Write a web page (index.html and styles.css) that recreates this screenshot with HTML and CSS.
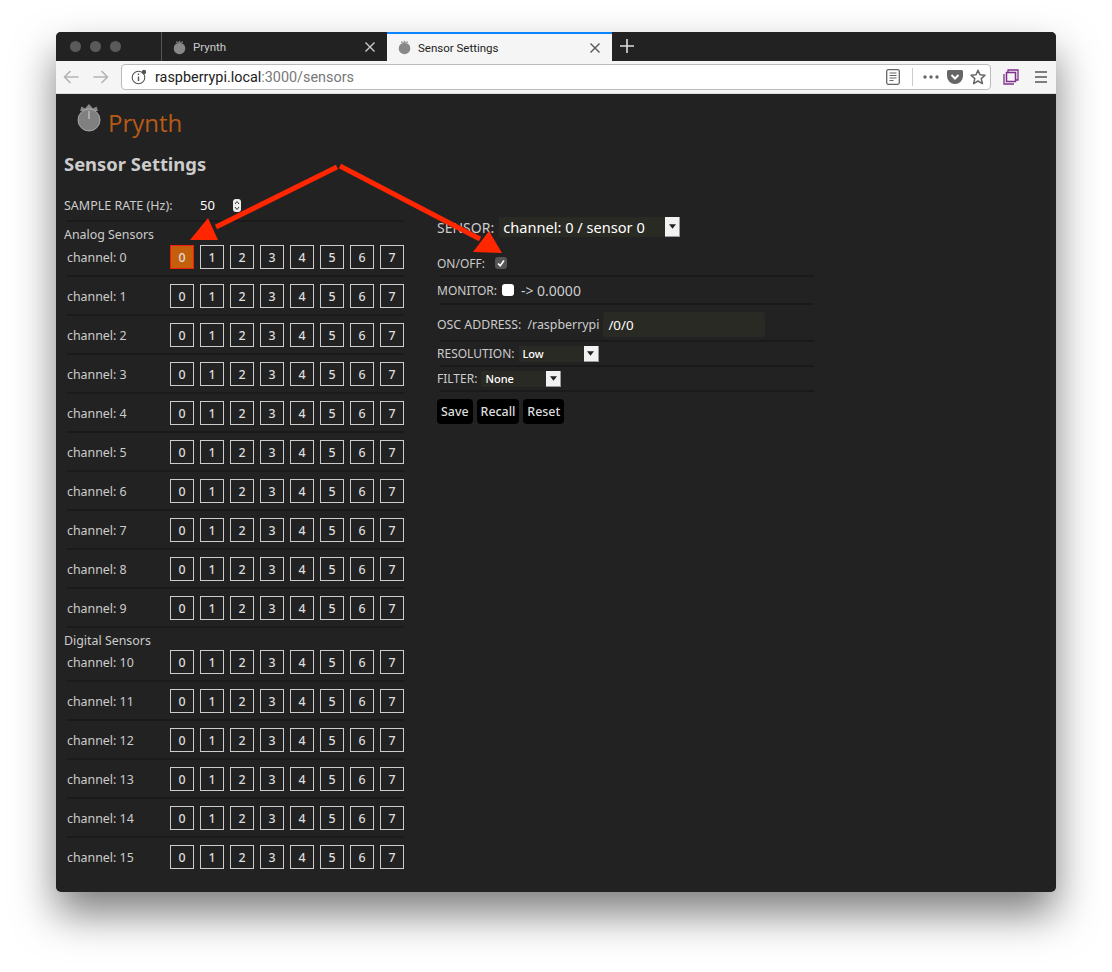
FILE: index.html
```html
<!DOCTYPE html>
<html lang="en">
<head>
  <meta charset="UTF-8">
  <meta name="viewport" content="width=device-width, initial-scale=1.0">
  <title>Sensor Settings</title>
  <link rel="stylesheet" href="styles.css">
</head>
<body>
  <div class="window">
    <!-- Barra de abas -->
    <div class="tabbar">
      <div class="lights"><i></i><i></i><i></i></div>
      <div class="tab">
        <svg class="tab-icon" viewBox="0 0 14 16"><path d="M3 3 L4 1 L5.5 2.5 L7 0.5 L8.5 2.5 L10 1 L11 3 Z" fill="#888"/><circle cx="7" cy="9" r="6.2" fill="#888"/></svg>
        <span class="tab-title">Prynth</span>
        <svg class="tab-close" viewBox="0 0 10 10"><path d="M0.5 0.5 L9.5 9.5 M9.5 0.5 L0.5 9.5" stroke="#ccc" stroke-width="1.4"/></svg>
      </div>
      <div class="tab active">
        <svg class="tab-icon" viewBox="0 0 14 16"><path d="M3 3 L4 1 L5.5 2.5 L7 0.5 L8.5 2.5 L10 1 L11 3 Z" fill="#888"/><circle cx="7" cy="9" r="6.2" fill="#888"/></svg>
        <span class="tab-title">Sensor Settings</span>
        <svg class="tab-close" viewBox="0 0 10 10"><path d="M0.5 0.5 L9.5 9.5 M9.5 0.5 L0.5 9.5" stroke="#555" stroke-width="1.4"/></svg>
      </div>
      <svg class="new-tab" viewBox="0 0 14 14"><path d="M7 0 V14 M0 7 H14" stroke="#ddd" stroke-width="1.6"/></svg>
    </div>

    <!-- Barra de navegação -->
    <div class="toolbar">
      <svg class="nav-icon" viewBox="0 0 16 14"><path d="M15.5 7 H1.5 M7.5 1 L1.5 7 L7.5 13" fill="none" stroke="#b4b4b4" stroke-width="1.6"/></svg>
      <svg class="nav-icon" viewBox="0 0 16 14"><path d="M0.5 7 H14.5 M8.5 1 L14.5 7 L8.5 13" fill="none" stroke="#b4b4b4" stroke-width="1.6"/></svg>
      <div class="urlbar">
        <svg class="info-icon" viewBox="0 0 16 16"><circle cx="7.5" cy="8.5" r="6.3" fill="none" stroke="#555" stroke-width="1.1"/><path d="M7.5 7.5 V12 M7.5 4.6 V6" stroke="#555" stroke-width="1.4"/><circle cx="13" cy="3" r="2.2" fill="#555"/></svg>
        <span class="url"><span class="url-host">raspberrypi.local</span>:3000/sensors</span>
        <svg class="reader-icon" viewBox="0 0 14 16"><rect x="0.7" y="0.7" width="12.6" height="14.6" rx="1.5" fill="none" stroke="#666" stroke-width="1.3"/><path d="M3.5 4 H10.5 M3.5 6.5 H10.5 M3.5 9 H10.5 M3.5 11.5 H7.5" stroke="#666" stroke-width="1"/></svg>
        <span class="url-sep"></span>
        <svg class="dots-icon" viewBox="0 0 16 4"><circle cx="2" cy="2" r="1.7" fill="#666"/><circle cx="8" cy="2" r="1.7" fill="#666"/><circle cx="14" cy="2" r="1.7" fill="#666"/></svg>
        <svg class="pocket-icon" viewBox="0 0 16 14"><path d="M1.5 0 H14.5 A1.5 1.5 0 0 1 16 1.5 V6 A8 8 0 0 1 0 6 V1.5 A1.5 1.5 0 0 1 1.5 0 Z" fill="#666"/><path d="M4.5 5 L8 8.5 L11.5 5" fill="none" stroke="#fff" stroke-width="2"/></svg>
        <svg class="star-icon" viewBox="0 0 16 16"><path d="M8 1.2 L10 5.8 L15 6.3 L11.2 9.6 L12.4 14.6 L8 12 L3.6 14.6 L4.8 9.6 L1 6.3 L6 5.8 Z" fill="none" stroke="#666" stroke-width="1.5" stroke-linejoin="round"/></svg>
      </div>
      <svg class="sync-icon" viewBox="0 0 16 16"><path d="M5 3 V1 H15 V11 H13" fill="none" stroke="#7f2f8c" stroke-width="1.3"/><rect x="3.5" y="3.5" width="9" height="9" fill="none" stroke="#7f2f8c" stroke-width="1.5"/><path d="M1 5 V15 H11" fill="none" stroke="#7f2f8c" stroke-width="1.3"/></svg>
      <svg class="menu-icon" viewBox="0 0 12 12"><path d="M0 1 H12 M0 6 H12 M0 11 H12" stroke="#555" stroke-width="1.5"/></svg>
    </div>

    <div class="page">
      <div class="logo">
        <svg class="logo-knob" viewBox="0 0 24 30"><path d="M3 9 L4.5 4.5 L8 6.5 L12 2 L16 6.5 L19.5 4.5 L21 9 Z" fill="#8a8a8a"/><circle cx="12" cy="18" r="11" fill="#808080" stroke="#b5b5b5" stroke-width="0.8"/><rect x="11" y="9" width="2" height="8" fill="#aaa"/></svg>
        <span class="logo-name">Prynth</span>
      </div>
      <h1>Sensor Settings</h1>

      <div class="columns">
        <div class="channels">
          <div class="sample-rate">
            <label>SAMPLE RATE (Hz):</label>
            <span class="rate-value">50</span>
            <svg class="spinner" viewBox="0 0 8 13"><rect width="8" height="13" rx="3" fill="#eee"/><path d="M2 5 L4 2.5 L6 5 M2 8 L4 10.5 L6 8" fill="none" stroke="#333"/></svg>
          </div>

          <h2>Analog Sensors</h2>
          <div class="channel"><span class="channel-name">channel: 0</span><div class="sensors"><button class="on">0</button><button>1</button><button>2</button><button>3</button><button>4</button><button>5</button><button>6</button><button>7</button></div></div>
          <div class="channel"><span class="channel-name">channel: 1</span><div class="sensors"><button>0</button><button>1</button><button>2</button><button>3</button><button>4</button><button>5</button><button>6</button><button>7</button></div></div>
          <div class="channel"><span class="channel-name">channel: 2</span><div class="sensors"><button>0</button><button>1</button><button>2</button><button>3</button><button>4</button><button>5</button><button>6</button><button>7</button></div></div>
          <div class="channel"><span class="channel-name">channel: 3</span><div class="sensors"><button>0</button><button>1</button><button>2</button><button>3</button><button>4</button><button>5</button><button>6</button><button>7</button></div></div>
          <div class="channel"><span class="channel-name">channel: 4</span><div class="sensors"><button>0</button><button>1</button><button>2</button><button>3</button><button>4</button><button>5</button><button>6</button><button>7</button></div></div>
          <div class="channel"><span class="channel-name">channel: 5</span><div class="sensors"><button>0</button><button>1</button><button>2</button><button>3</button><button>4</button><button>5</button><button>6</button><button>7</button></div></div>
          <div class="channel"><span class="channel-name">channel: 6</span><div class="sensors"><button>0</button><button>1</button><button>2</button><button>3</button><button>4</button><button>5</button><button>6</button><button>7</button></div></div>
          <div class="channel"><span class="channel-name">channel: 7</span><div class="sensors"><button>0</button><button>1</button><button>2</button><button>3</button><button>4</button><button>5</button><button>6</button><button>7</button></div></div>
          <div class="channel"><span class="channel-name">channel: 8</span><div class="sensors"><button>0</button><button>1</button><button>2</button><button>3</button><button>4</button><button>5</button><button>6</button><button>7</button></div></div>
          <div class="channel"><span class="channel-name">channel: 9</span><div class="sensors"><button>0</button><button>1</button><button>2</button><button>3</button><button>4</button><button>5</button><button>6</button><button>7</button></div></div>

          <h2 class="digital">Digital Sensors</h2>
          <div class="channel"><span class="channel-name">channel: 10</span><div class="sensors"><button>0</button><button>1</button><button>2</button><button>3</button><button>4</button><button>5</button><button>6</button><button>7</button></div></div>
          <div class="channel"><span class="channel-name">channel: 11</span><div class="sensors"><button>0</button><button>1</button><button>2</button><button>3</button><button>4</button><button>5</button><button>6</button><button>7</button></div></div>
          <div class="channel"><span class="channel-name">channel: 12</span><div class="sensors"><button>0</button><button>1</button><button>2</button><button>3</button><button>4</button><button>5</button><button>6</button><button>7</button></div></div>
          <div class="channel"><span class="channel-name">channel: 13</span><div class="sensors"><button>0</button><button>1</button><button>2</button><button>3</button><button>4</button><button>5</button><button>6</button><button>7</button></div></div>
          <div class="channel"><span class="channel-name">channel: 14</span><div class="sensors"><button>0</button><button>1</button><button>2</button><button>3</button><button>4</button><button>5</button><button>6</button><button>7</button></div></div>
          <div class="channel last"><span class="channel-name">channel: 15</span><div class="sensors"><button>0</button><button>1</button><button>2</button><button>3</button><button>4</button><button>5</button><button>6</button><button>7</button></div></div>
        </div>

        <div class="details">
          <div class="sensor-row">
            <label class="sensor-label">SENSOR:</label>
            <div class="drop big"><span>channel: 0 / sensor 0</span><i><svg viewBox="0 0 8 5"><path d="M0 0 H8 L4 5 Z" fill="#222"/></svg></i></div>
          </div>
          <div class="field onoff">
            <label>ON/OFF:</label>
            <span class="check checked"><svg viewBox="0 0 12 12"><path d="M3 6.5 L5.2 8.8 L9 3.5" fill="none" stroke="#fff" stroke-width="1.6"/></svg></span>
          </div>
          <div class="field monitor">
            <label>MONITOR:</label>
            <span class="check"></span>
            <span class="monitor-value">-&gt; 0.0000</span>
          </div>
          <div class="field osc">
            <label>OSC ADDRESS:</label>
            <span class="osc-prefix">/raspberrypi</span>
            <input class="osc-input" type="text" value="/0/0">
          </div>
          <div class="field small resolution">
            <label>RESOLUTION:</label>
            <div class="drop"><span>Low</span><i><svg viewBox="0 0 8 5"><path d="M0 0 H8 L4 5 Z" fill="#222"/></svg></i></div>
          </div>
          <div class="field small filter">
            <label>FILTER:</label>
            <div class="drop"><span>None</span><i><svg viewBox="0 0 8 5"><path d="M0 0 H8 L4 5 Z" fill="#222"/></svg></i></div>
          </div>
          <div class="actions">
            <button>Save</button>
            <button>Recall</button>
            <button>Reset</button>
          </div>
        </div>
      </div>
    </div>

    <!-- Setas vermelhas sobre a página -->
    <svg class="arrows" viewBox="0 0 1000 860">
      <path d="M281 135 L160 195" stroke="#ff2600" stroke-width="5" fill="none"/>
      <path d="M134 208 L162 208 L152 186 Z" fill="#ff2600"/>
      <path d="M284 134 L424 207" stroke="#ff2600" stroke-width="5" fill="none"/>
      <path d="M417 220 L446 221 L433 199 Z" fill="#ff2600"/>
    </svg>
  </div>
</body>
</html>
```

FILE: styles.css
```css
html, body {
  margin: 0;
  height: 100%;
  background: #fff;
}
body {
  padding: 32px 56px 0;
  box-sizing: border-box;
  overflow: hidden;
  font-family: "Noto Sans", sans-serif;
}
.window {
  position: relative;
  width: 1000px;
  height: 860px;
  border-radius: 5px;
  background: #222;
  box-shadow: 0 22px 42px rgba(0, 0, 0, 0.5);
}

/* abas */
.tabbar {
  display: flex;
  align-items: stretch;
  height: 29px;
  background: #222;
  border-radius: 5px 5px 0 0;
}
.lights {
  display: flex;
  align-items: center;
  gap: 9px;
  width: 106px;
  padding-left: 14px;
  box-sizing: border-box;
  border-right: 1px solid #555;
}
.lights i {
  width: 11px;
  height: 11px;
  border-radius: 50%;
  background: #5a5a5a;
}
.tab {
  display: flex;
  align-items: center;
  width: 225px;
  padding: 1px 12px 0 11px;
  box-sizing: border-box;
  color: #ccc;
  font: 11.5px Roboto, sans-serif;
}
.tab.active {
  background: #f5f5f5;
  color: #222;
  border-top: 2px solid #0a84ff;
  padding-top: 0;
}
.tab-icon {
  width: 13px;
  height: 15px;
  margin-right: 7px;
}
.tab-title {
  flex: 1;
}
.tab-close {
  width: 10px;
  height: 10px;
}
.new-tab {
  width: 14px;
  height: 14px;
  margin: 7px 0 0 8px;
}

/* navegação */
.toolbar {
  display: flex;
  align-items: center;
  height: 33px;
  background: #f5f5f5;
  padding-left: 7px;
  box-sizing: border-box;
  border-bottom: 1px solid #ddd;
}
.nav-icon {
  width: 16px;
  height: 14px;
  margin-right: 14px;
}
.nav-icon + .urlbar {
  margin-left: -2px;
}
.urlbar {
  display: flex;
  align-items: center;
  width: 870px;
  height: 26px;
  background: #fff;
  border: 1px solid #bbb;
  border-radius: 4px;
  box-sizing: border-box;
  padding: 0 4px 0 9px;
}
.info-icon {
  width: 16px;
  height: 16px;
  margin-right: 8px;
}
.url {
  flex: 1;
  padding-top: 1px;
  color: #777;
  font: 14.4px Roboto, sans-serif;
}
.url-host {
  color: #222;
}
.reader-icon {
  width: 14px;
  height: 16px;
}
.url-sep {
  width: 1px;
  height: 18px;
  background: #ccc;
  margin: 0 10px 0 12px;
}
.dots-icon {
  width: 16px;
  height: 4px;
  margin-right: 8px;
}
.pocket-icon {
  width: 16px;
  height: 14px;
  margin-right: 7px;
}
.star-icon {
  width: 16px;
  height: 16px;
}
.sync-icon {
  width: 16px;
  height: 16px;
  margin-left: 12px;
}
.menu-icon {
  width: 12px;
  height: 12px;
  margin-left: 16px;
}

/* página */
.page {
  padding: 8px 8px 0;
  color: #ccc;
  font-size: 12.4px;
}
.logo {
  display: flex;
  align-items: flex-start;
  height: 37px;
  padding-left: 13px;
}
.logo-knob {
  width: 24px;
  height: 30px;
}
.logo-name {
  margin: 3px 0 0 7px;
  color: #b85a17;
  font-size: 24px;
  line-height: 36px;
  font-family: "Open Sans", sans-serif;
}
h1 {
  margin: 13px 0 0;
  font-size: 18.4px;
  line-height: 24px;
  font-weight: bold;
  color: #ccc;
}
.columns {
  display: flex;
  align-items: flex-start;
}
.channels {
  width: 340px;
}
.sample-rate {
  display: flex;
  align-items: center;
  height: 30px;
  margin-top: 14px;
}
.sample-rate label {
  width: 136px;
  font-size: 12.5px;
}
.rate-value {
  width: 33px;
  color: #fff;
  font-size: 13px;
}
.spinner {
  width: 8px;
  height: 13px;
}
/* the rules start 3px right of the headings */
h2 {
  margin: 0 0 2px;
  padding: 6px 0 0;
  background: linear-gradient(#1a1a1a, #1a1a1a) 3px 0 / calc(100% - 3px) 2px no-repeat;
  font-size: 12.4px;
  line-height: 17px;
  font-weight: normal;
  color: #ccc;
}
h2.digital {
  margin: -7px 0 1px;
  padding-top: 4px;
  background: none;
}
.channel {
  display: flex;
  align-items: center;
  margin: 0 0 7px 3px;
  padding-bottom: 6px;
  border-bottom: 2px solid #1a1a1a;
}
.channel.last {
  border-bottom: 0;
}
.channel-name {
  width: 103px;
}
.sensors {
  display: flex;
  gap: 6px;
}
.sensors button {
  width: 24px;
  height: 24px;
  padding: 0;
  background: #222;
  border: 1px solid #ccc;
  color: #ddd;
  font: 500 12.4px "Noto Sans", sans-serif;
}
.sensors button.on {
  background: #c65f0d;
  border-color: #f01c0c;
}

/* painel da direita */
.details {
  width: 377px;
  margin-left: 33px;
}
.sensor-row {
  display: flex;
  align-items: center;
  gap: 5px;
  height: 20px;
  margin-top: 41px;
}
.sensor-label {
  font-size: 14px;
}
.drop {
  display: flex;
  align-items: center;
  background: #2a2a24;
  color: #fff;
  height: 16px;
  width: 80px;
  font-size: 11px;
  font-weight: 500;
  box-sizing: border-box;
}
.drop span {
  flex: 1;
  padding-left: 4px;
}
.drop i {
  display: flex;
  align-items: center;
  justify-content: center;
  width: 15px;
  height: 100%;
  background: #f2f2f2;
  border-right: 1px solid #999;
  border-bottom: 1px solid #999;
  box-sizing: border-box;
}
.drop svg {
  width: 7px;
  height: 5px;
}
.drop.big {
  width: 181px;
  height: 20px;
  font-size: 14.6px;
  font-weight: normal;
}
.field {
  display: flex;
  align-items: center;
  padding-bottom: 2px;
  background: linear-gradient(#1a1a1a, #1a1a1a) 3px 100% / calc(100% - 3px) 2px no-repeat;
  box-sizing: border-box;
}
.field label {
  margin-right: 5px;
  font-size: 12px;
}
.onoff {
  height: 26px;
  margin-top: 14px;
}
.onoff label {
  margin-right: 10px;
}
.monitor {
  height: 28px;
}
.osc {
  height: 37px;
  padding-top: 4px;
}
.osc label {
  margin-right: 6px;
  font-size: 12.3px;
}
.small {
  height: 25px;
}
.small label {
  margin-right: 4px;
}
.check {
  display: inline-flex;
  width: 12px;
  height: 12px;
  border-radius: 3px;
  background: #fff;
}
.check.checked {
  background: #555;
}
.check svg {
  width: 12px;
  height: 12px;
}
.monitor-value {
  margin-left: 7px;
  font-size: 14px;
}
.osc-prefix {
  margin-right: 4px;
}
.osc-input {
  width: 162px;
  height: 25px;
  padding: 0 5px;
  box-sizing: border-box;
  background: #2a2a24;
  border: 0;
  border-radius: 3px;
  color: #fff;
  font: 13.4px "Noto Sans", sans-serif;
}
.actions {
  display: flex;
  gap: 4px;
  margin-top: 7px;
}
.actions button {
  height: 25px;
  padding: 0 4px;
  background: #000;
  border: 0;
  border-radius: 4px;
  color: #ddd;
  font: 500 12.4px "Noto Sans", sans-serif;
}

/* setas */
.arrows {
  position: absolute;
  left: 0;
  top: 0;
  width: 1000px;
  height: 860px;
  pointer-events: none;
}
```
